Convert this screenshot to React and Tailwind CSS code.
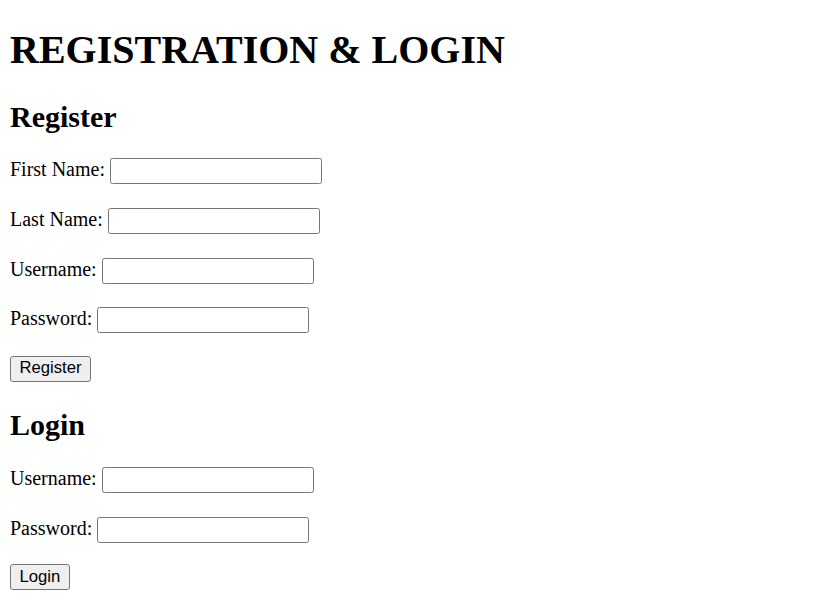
import React from 'react';

const Field = ({ label, type = 'text' }) => (
  <p className="my-[19.8px]">
    {label}{' '}
    <input
      type={type}
      className="inline-block w-[212px] h-[26px] px-[2.5px] py-[1.25px] border border-[#767676] rounded-[2.5px] bg-white text-[16.67px] align-baseline"
      style={{ fontFamily: '"Liberation Sans", Arial, sans-serif' }}
    />
  </p>
);

const Btn = ({ children, pull = 'mt-[-2px]' }) => (
  <p className={pull + ' mb-[20px]'}>
    <button
      className="inline-block h-[26px] px-[8.5px] border border-[#767676] rounded-[3px] bg-[#efefef] text-[16.67px] text-black leading-none"
      style={{ fontFamily: '"Liberation Sans", Arial, sans-serif' }}
    >
      {children}
    </button>
  </p>
);

export default function App() {
  return (
    <div className="bg-white min-h-[611px] text-black text-[20px] font-['Liberation_Serif','Times_New_Roman',serif] overflow-hidden">
      <div className="mx-[10px] mb-[10px] pt-[0.1px]">
        <h1 className="text-[40px] font-bold leading-[1.15] my-[26.8px]">REGISTRATION &amp; LOGIN</h1>
        <h2 className="text-[30px] font-bold leading-[1.15] mt-[24.9px] mb-[19.6px]">Register</h2>
        <Field label="First Name:" />
        <Field label="Last Name:" />
        <Field label="Username:" />
        <Field label="Password:" type="password" />
        <Btn>Register</Btn>
        <h2 className="text-[30px] font-bold leading-[1.15] mt-[26.6px] mb-[20.6px]">Login</h2>
        <Field label="Username:" />
        <Field label="Password:" type="password" />
        <Btn pull="mt-[-3px]">Login</Btn>
      </div>
    </div>
  );
}
